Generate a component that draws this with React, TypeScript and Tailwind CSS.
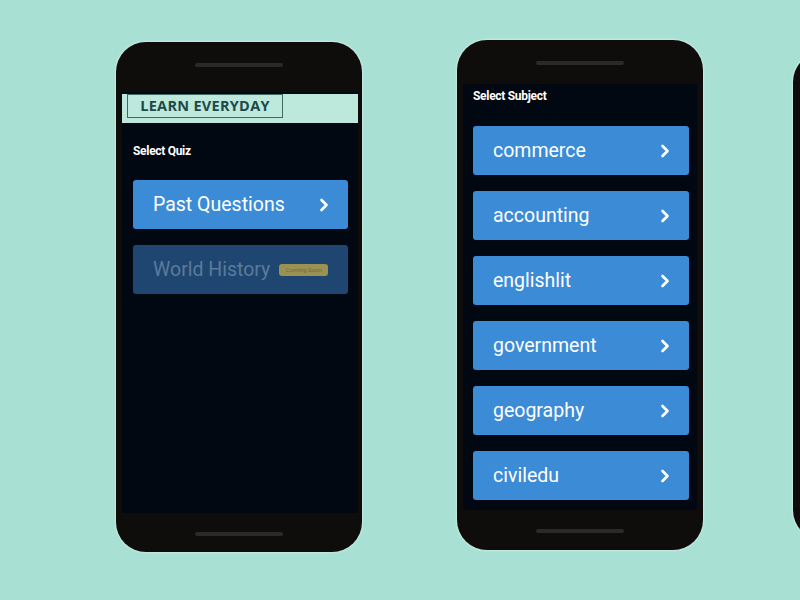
import { ChevronRight } from "lucide-react";

const subjects = ["commerce", "accounting", "englishlit", "government", "geography", "civiledu"];

function Speaker({ className = "" }: { className?: string }) {
  return <div className={`mx-auto h-[4px] w-[88px] rounded-full bg-[#2a2a2a] ${className}`} />;
}

function QuizButton({ label }: { label: string }) {
  return (
    <div className="flex h-[49px] items-center justify-between rounded-[3px] bg-[#3b8bd7] pl-5 pr-[14px] text-white">
      <span className="text-[19.5px] leading-none">{label}</span>
      <ChevronRight size={20} strokeWidth={3.2} />
    </div>
  );
}

export default function App() {
  return (
    <div
      className="relative flex h-[600px] w-[800px] items-start overflow-hidden bg-[#a9e0d4]"
      style={{ fontFamily: "Roboto, 'Liberation Sans', sans-serif" }}
    >
      {/* phone 1 */}
      <div className="ml-[116px] mt-[42px] flex h-[510px] w-[246px] flex-col rounded-[30px] bg-[#0f0c0c] shadow-[0_0_2px_1px_rgba(255,255,255,0.35)]">
        <div className="h-[50px] pt-[21px]">
          <Speaker />
        </div>
        <div className="ml-[6px] mr-[4px] flex-1 bg-[#020811]">
          <div className="mt-[2px] h-[29px] bg-[#bde8dc] pl-[5px]">
            <div className="flex h-[24px] w-[156px] items-center justify-center border border-[#3e6a62] text-[14.5px] font-bold tracking-[0.02em] text-[#1d4a48]" style={{ fontFamily: "'Open Sans', sans-serif" }}>
              LEARN EVERYDAY
            </div>
          </div>
          <div className="mt-[19px] pl-[11px] text-[12px] font-bold tracking-tight text-white">Select Quiz</div>
          <div className="mt-[20px] flex flex-col gap-[16px] pl-[11px] pr-[10px]">
            <QuizButton label="Past Questions" />
            <div className="flex h-[49px] items-center rounded-[3px] bg-[#1e4670] pl-5">
              <span className="text-[19.5px] leading-none text-[#5a7b9b]">World History</span>
              <span className="ml-[9px] flex h-[12px] w-[49px] items-center justify-center rounded-[3px] bg-[#9a9152] text-[6px] text-[#6f6a3e]">
                Coming Soon
              </span>
            </div>
          </div>
        </div>
        <div className="h-[39px] pt-[19px]">
          <Speaker />
        </div>
      </div>

      {/* phone 2 */}
      <div className="ml-[95px] mt-[40px] flex h-[510px] w-[246px] flex-col rounded-[30px] bg-[#0f0c0c] shadow-[0_0_2px_1px_rgba(255,255,255,0.35)]">
        <div className="h-[44px] pt-[21px]">
          <Speaker />
        </div>
        <div className="mx-[6px] flex-1 bg-[#020811]">
          <div className="mt-[3px] pl-[10px] text-[12px] font-bold tracking-tight text-white">Select Subject</div>
          <div className="mt-[21px] flex flex-col gap-[16px] pl-[10px] pr-[8px]">
            {subjects.map((s) => (
              <QuizButton key={s} label={s} />
            ))}
          </div>
        </div>
        <div className="h-[40px] pt-[19px]">
          <Speaker />
        </div>
      </div>

      {/* phone 3, cut off */}
      <div className="absolute left-[793px] top-[52px] h-[488px] w-[246px] rounded-[30px] bg-[#0f0c0c] shadow-[0_0_2px_1px_rgba(255,255,255,0.35)]" />
    </div>
  );
}
